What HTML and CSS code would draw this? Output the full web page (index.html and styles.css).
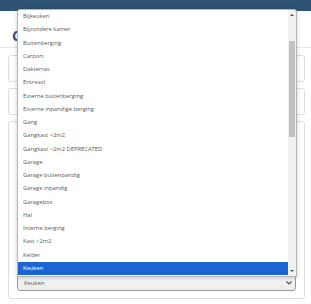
FILE: index.html
```html
<!DOCTYPE html>
<html lang="nl">
<head>
  <meta charset="UTF-8">
  <title>Ruimte toevoegen</title>
  <meta name="viewport" content="width=device-width, initial-scale=1.0">
  <link rel="stylesheet" href="styles.css">
</head>
<body>
  <div class="topbar"></div>

  <div class="page">
    <h1 class="title">Compartiment toevoegen</h1>
    <div class="divider"></div>

    <div class="field"></div>
    <div class="field"></div>

    <div class="panel">
      <div class="inner-field tall"></div>
      <div class="inner-field big"></div>
      <div class="select-box">
        <span>Keuken</span>
        <svg class="chevron" width="6" height="4" viewBox="0 0 6 4"><path d="M0.5 0.5 L3 3 L5.5 0.5" fill="none" stroke="#555" stroke-width="1.2"/></svg>
      </div>
    </div>
  </div>

  <!-- open dropdown van de select -->
  <div class="listbox">
    <ul class="options">
      <li>Bijkeuken</li>
      <li>Bijzondere kamer</li>
      <li>Buitenberging</li>
      <li>Carport</li>
      <li>Dakterras</li>
      <li>Entresol</li>
      <li>Externe buitenberging</li>
      <li>Externe inpandige berging</li>
      <li>Gang</li>
      <li>Gangkast &lt;2m2</li>
      <li>Gangkast &gt;2m2 DEPRECATED</li>
      <li>Garage</li>
      <li>Garage buitenpandig</li>
      <li>Garage inpandig</li>
      <li>Garagebox</li>
      <li>Hal</li>
      <li>Interne berging</li>
      <li>Kast &lt;2m2</li>
      <li>Kelder</li>
      <li class="selected">Keuken</li>
    </ul>
    <div class="scrollbar">
      <div class="arrow up"></div>
      <div class="track"><div class="thumb"></div></div>
      <div class="arrow down"></div>
    </div>
  </div>
</body>
</html>
```

FILE: styles.css
```css
* { margin: 0; padding: 0; box-sizing: border-box; }
html, body {
  font-family: 'Open Sans', 'Liberation Sans', sans-serif;
  background-color: #fff;
}
.topbar {
  height: 11px;
  background-color: #2e5372;
}
.page {
  padding: 17px 6px 0 8px;
}
.title {
  font-size: 14px;
  line-height: 16px;
  color: #2e5372;
  font-weight: 700;
  padding-left: 4px;
  white-space: nowrap;
}
.divider {
  margin: 3px -8px 0;
  border-top: 1px solid #e6e6e6;
}
.field {
  height: 27px;
  margin-top: 7px;
  border: 1px solid #dcdcdc;
  border-radius: 3px;
}
.field + .field {
  margin-top: 6px;
}
.panel {
  margin-top: 6px;
  height: 178px;
  border: 1px solid #dcdcdc;
  border-radius: 3px;
  padding: 59px 8px 0 8px;
  display: flex;
  flex-direction: column;
  gap: 10px;
}
.inner-field {
  border: 1px solid #cfcfcf;
  border-radius: 3px;
}
.inner-field.tall { height: 18px; }
.inner-field.big { height: 56px; }
.select-box {
  height: 16px;
  border: 1px solid #9a9a9a;
  border-radius: 3px;
  background: linear-gradient(#f7f7f7, #ececec);
  display: flex;
  align-items: center;
  justify-content: space-between;
  padding: 0 3px 0 6px;
  font-size: 5.8px;
  color: #555;
}
.chevron {
  display: block;
}

/* dropdown ligt over de pagina heen */
.listbox {
  position: absolute;
  left: 17px;
  top: 9px;
  width: 280px;
  height: 268px;
  background-color: #fff;
  border: 1px solid #b5b5b5;
  border-radius: 3px 3px 0 0;
  box-shadow: 0 1px 4px rgba(0,0,0,0.2);
  display: flex;
  overflow: hidden;
}
.options {
  list-style: none;
  flex: 1;
}
.options li {
  height: 13.26px;
  line-height: 13.26px;
  padding-left: 5px;
  font-size: 5.8px;
  color: #5a5a5a;
  white-space: nowrap;
}
.options li.selected {
  background-color: #1a64d3;
  color: #fff;
}
.scrollbar {
  width: 8px;
  background-color: #f1f1f1;
  display: flex;
  flex-direction: column;
}
.arrow {
  height: 10px;
  display: flex;
  align-items: center;
  justify-content: center;
}
.arrow::before {
  content: '';
  border-left: 2px solid transparent;
  border-right: 2px solid transparent;
}
.arrow.up::before { border-bottom: 2px solid #505050; }
.arrow.down::before { border-top: 2px solid #505050; }
.track {
  flex: 1;
  padding: 21px 1px 0;
}
.thumb {
  height: 96px;
  background-color: #c1c1c1;
}
```
